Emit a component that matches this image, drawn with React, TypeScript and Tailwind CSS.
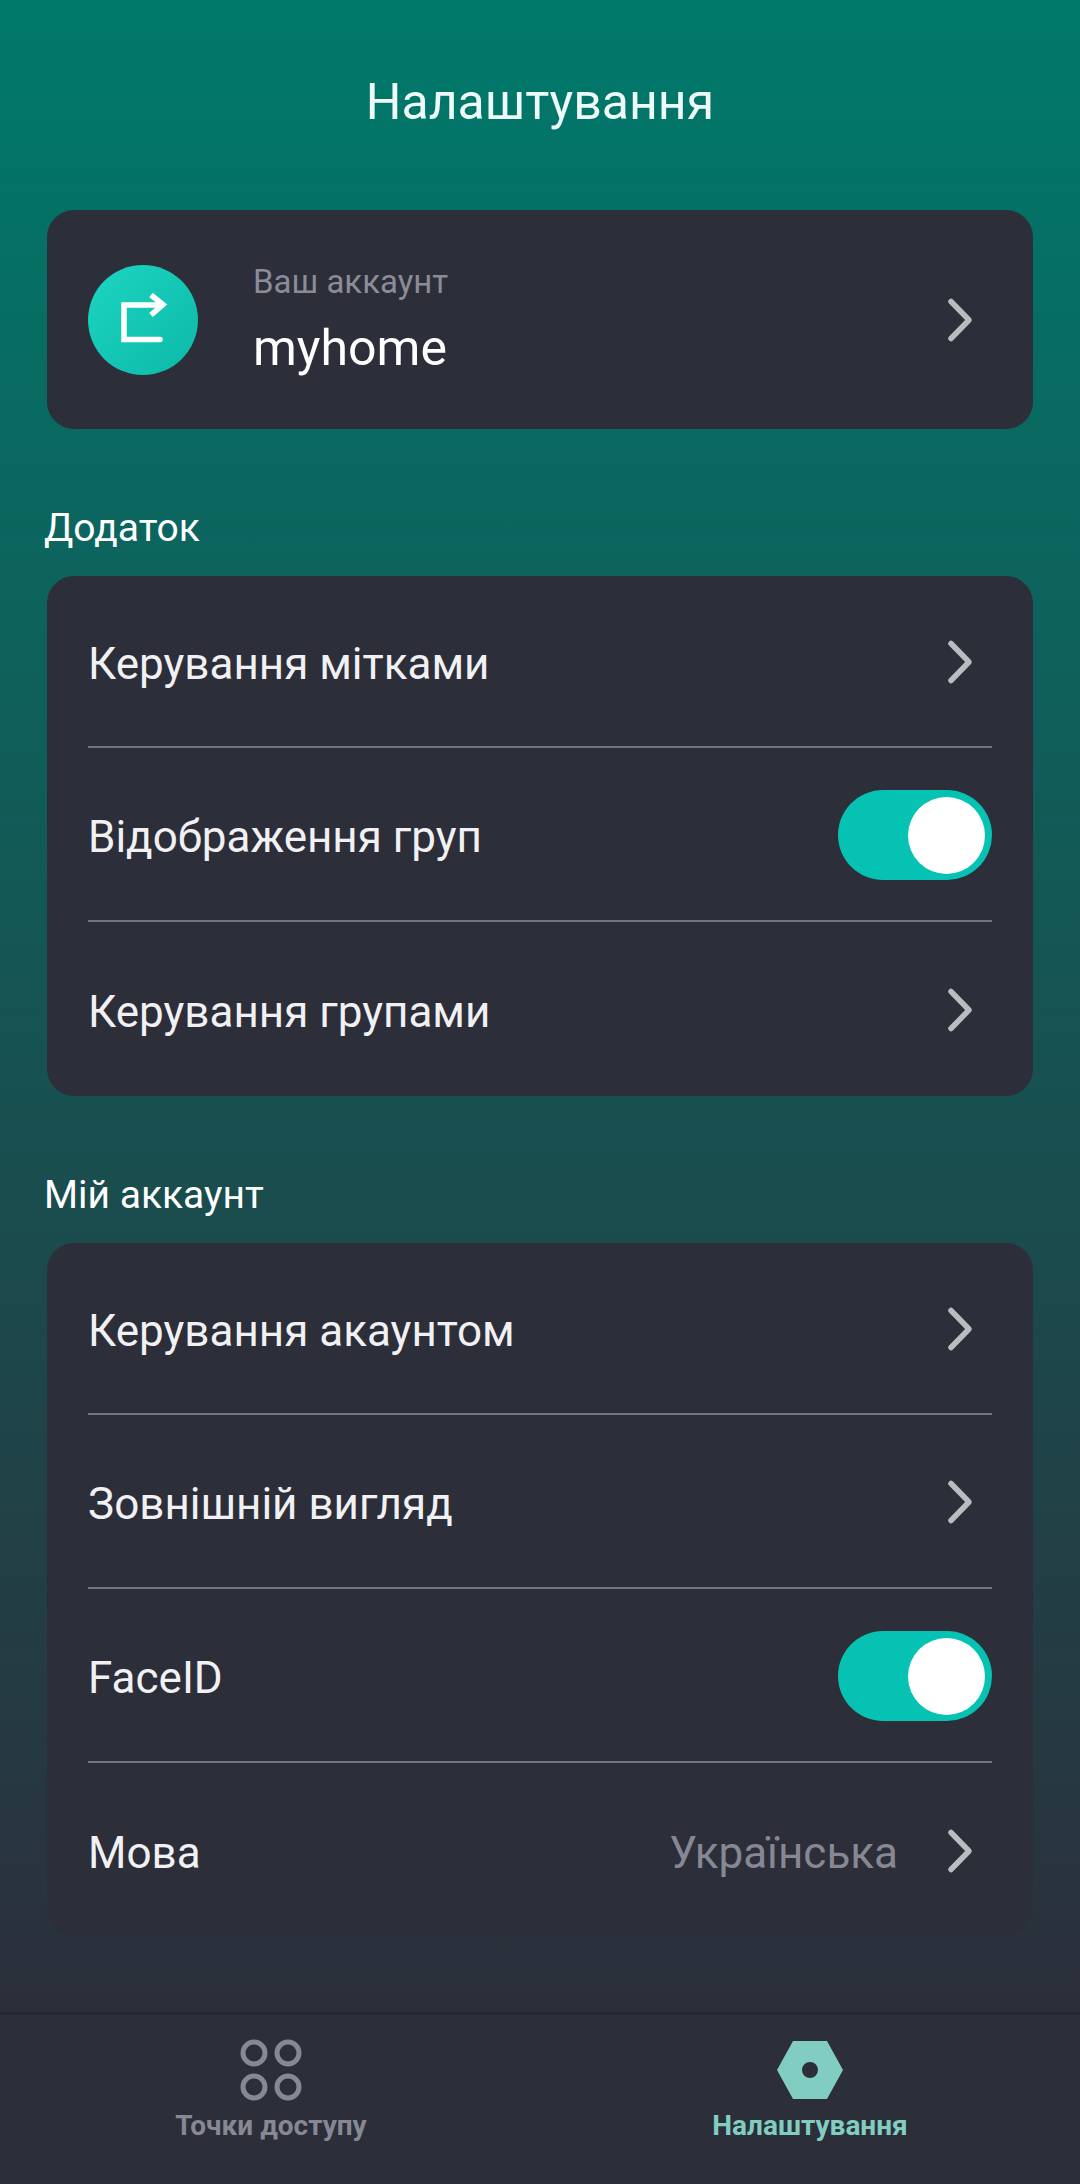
function Chevron() {
  return (
    <svg width="30" height="46" viewBox="0 0 30 46" fill="none" className="shrink-0">
      <path d="M6 4.5 L24 23 L6 41.5" stroke="#b9bdbf" strokeWidth="5.5" strokeLinecap="round" strokeLinejoin="round" />
    </svg>
  );
}

function Toggle() {
  return (
    <div className="mt-[2px] w-[154px] h-[90px] rounded-full bg-[#06c2b2] flex items-center justify-end pr-[7px]">
      <div className="w-[77px] h-[77px] rounded-full bg-white" />
    </div>
  );
}

function Row({ label, value, toggle, last }: { label: string; value?: string; toggle?: boolean; last?: boolean }) {
  return (
    <div className={`h-[174px] first:h-[172px] flex items-center mx-[41px] ${last ? "" : "border-b-2 border-[#73747c]"}`}>
      <span className="flex-1 pt-[5px] text-[44px] text-[#f1f1f3]">{label}</span>
      {value && <span className="pt-[5px] text-[44px] text-[#868894] mr-[47px]">{value}</span>}
      {toggle ? <Toggle /> : <div className="mt-[2px] mr-[17px] flex"><Chevron /></div>}
    </div>
  );
}

function Section({ title, children }: { title: string; children: React.ReactNode }) {
  return (
    <div>
      <div className="text-[39px] leading-[44px] text-white ml-[44px] mb-[26px]">{title}</div>
      <div className="mx-[47px] rounded-[27px] bg-[#2c2e3a]">{children}</div>
    </div>
  );
}

function AccountIcon() {
  return (
    <div className="w-[110px] h-[110px] rounded-full bg-gradient-to-br from-[#1cd6c2] to-[#0cb8a8] flex items-center justify-center shrink-0">
      <svg width="110" height="110" viewBox="0 0 110 110" fill="none">
        <path d="M71 40 H36 V74.5 H72" stroke="#fff" strokeWidth="5.5" strokeLinecap="round" />
        <path d="M63 30 L75 39.5 L63 50" stroke="#fff" strokeWidth="5.5" strokeLinejoin="miter" />
      </svg>
    </div>
  );
}

function PointsIcon() {
  return (
    <svg width="62" height="62" viewBox="0 0 62 62" fill="none" stroke="#868894" strokeWidth="5">
      <circle cx="14" cy="14" r="11" />
      <circle cx="48" cy="14" r="11" />
      <circle cx="14" cy="48" r="11" />
      <circle cx="48" cy="48" r="11" />
    </svg>
  );
}

function NutIcon() {
  return (
    <svg width="66" height="58" viewBox="0 0 66 58">
      <path fillRule="evenodd" fill="#82cdc2" d="M16 0 H50 L66 29 L50 58 H16 L0 29 Z M33 21 A8 8 0 1 0 33 37 A8 8 0 1 0 33 21 Z" />
    </svg>
  );
}

export default function App() {
  return (
    <div className="w-[1080px] h-[2184px] flex flex-col bg-linear-to-b/srgb from-[#00796b] to-[#2c2e3a] to-[93%] font-['Roboto',sans-serif] overflow-hidden">
      <div className="h-[210px] pb-[6px] flex items-center justify-center text-[50px] text-[#eefaf7]">Налаштування</div>

      <div className="mx-[47px] h-[219px] rounded-[27px] bg-[#2c2e3a] flex items-center pl-[41px] pr-[58px]">
        <AccountIcon />
        <div className="flex-1 ml-[55px]">
          <div className="text-[33px] leading-[36px] text-[#8a8c98]">Ваш аккаунт</div>
          <div className="text-[50px] leading-[54px] mt-[21px] text-white">myhome</div>
        </div>
        <Chevron />
      </div>

      <div className="mt-[77px]">
        <Section title="Додаток">
          <Row label="Керування мітками" />
          <Row label="Відображення груп" toggle />
          <Row label="Керування групами" last />
        </Section>
      </div>

      <div className="mt-[77px]">
        <Section title="Мій аккаунт">
          <Row label="Керування акаунтом" />
          <Row label="Зовнішній вигляд" />
          <Row label="FaceID" toggle />
          <Row label="Мова" value="Українська" last />
        </Section>
      </div>

      <div className="mt-auto h-[172px] bg-[#2c2e3a] border-t-[3px] border-[#262832] grid grid-cols-2">
        <div className="flex flex-col items-center pt-[24px] w-[542px]">
          <PointsIcon />
          <span className="text-[28px] leading-[34px] mt-[8px] font-bold text-[#868894]">Точки доступу</span>
        </div>
        <div className="flex flex-col items-center pt-[26px] w-[540px]">
          <NutIcon />
          <span className="text-[28px] leading-[34px] mt-[10px] font-bold text-[#82cdc2]">Налаштування</span>
        </div>
      </div>
    </div>
  );
}
